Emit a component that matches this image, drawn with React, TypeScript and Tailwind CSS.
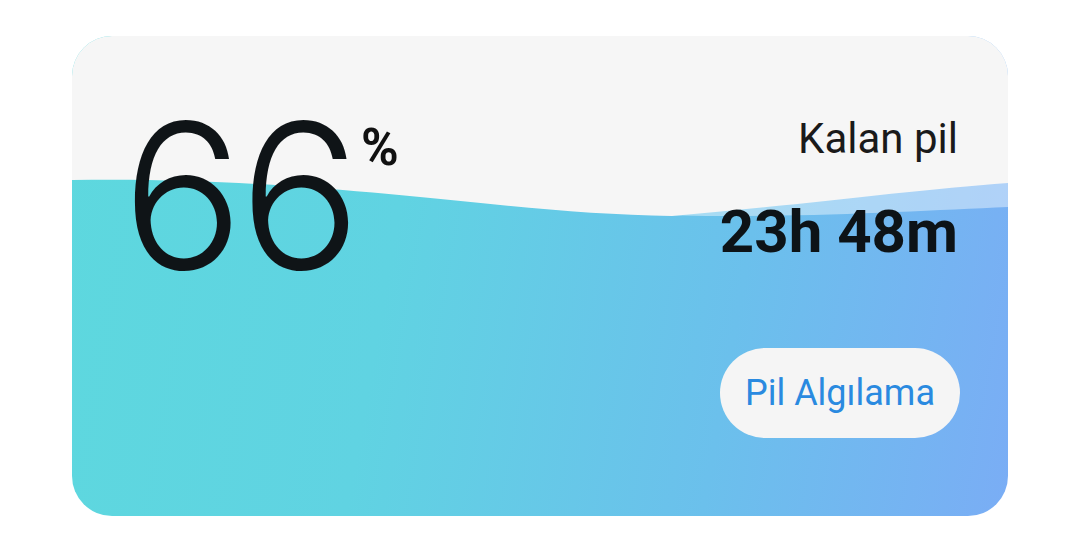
export default function App() {
  return (
    <div className="w-[1080px] h-[540px] bg-white pt-[36px] pl-[72px]">
      <div className="relative w-[936px] h-[480px] rounded-[40px] overflow-hidden bg-[linear-gradient(100deg,#5dd8de_0%,#60d3e2_35%,#6bc0ec_70%,#7aadf5_100%)]">
        {/* wave */}
        <svg className="absolute inset-0" width="936" height="480" viewBox="0 0 936 480">
          <path d="M400 0 H936 V171 C840 175 700 184 560 178 L400 160 Z" fill="#ffffff" fillOpacity="0.42" />
          <path d="M0 0 H936 V147 C840 154 720 170 600 180 C430 178 260 140 0 144 Z" fill="#f6f6f6" />
        </svg>

        <div className="relative flex justify-between pl-[50px] pr-[50px]">
          <div className="flex items-start pt-[59px]">
            <span
              className="text-[202px] leading-none font-light text-[#0f1417] tracking-[-4px]"
              style={{ fontFamily: 'Inter, "Noto Sans", sans-serif' }}
            >
              66
            </span>
            <span
              className="ml-[4px] mt-[27px] text-[51px] leading-none font-bold text-[#111]"
              style={{ fontFamily: 'Roboto, "Liberation Sans", sans-serif' }}
            >
              %
            </span>
          </div>

          <div
            className="flex flex-col items-end pt-[82px]"
            style={{ fontFamily: 'Roboto, "Liberation Sans", sans-serif' }}
          >
            <div className="text-[42px] leading-none text-[#1a1a1a]">Kalan pil</div>
            <div className="mt-[42px] text-[60px] leading-none font-bold text-[#0d1317]">23h 48m</div>
            <button className="mt-[86px] w-[240px] h-[90px] rounded-full bg-[#f5f5f5] text-[36px] text-[#2a8ae0] flex items-center justify-center mr-[-2px]">
              Pil Algılama
            </button>
          </div>
        </div>
      </div>
    </div>
  );
}
